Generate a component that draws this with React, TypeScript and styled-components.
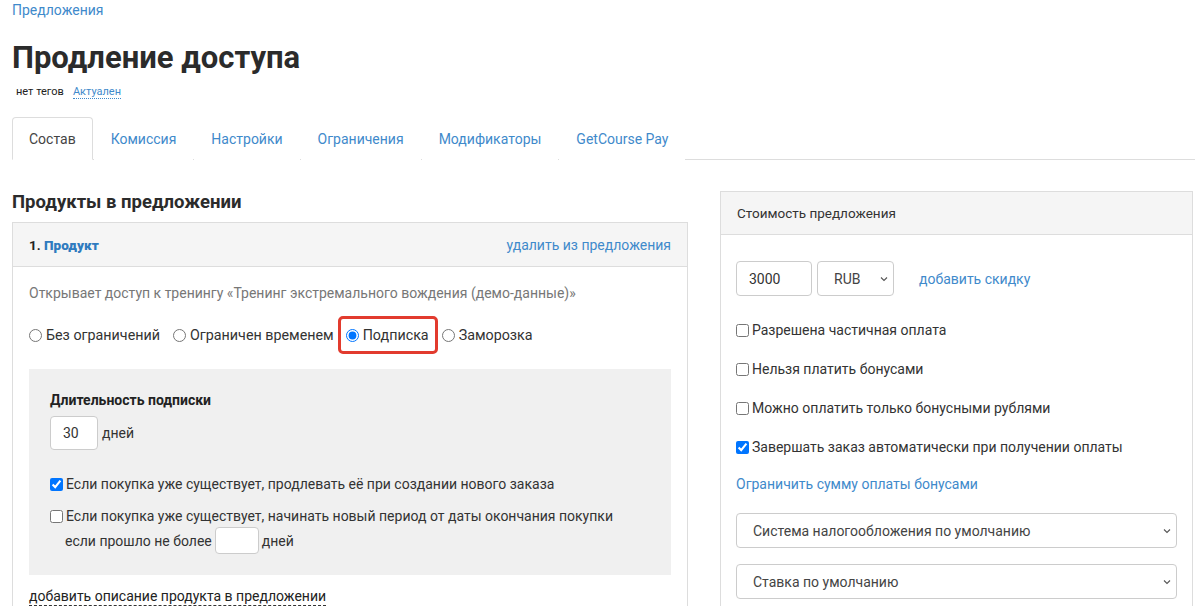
import React from "react";
import styled, { createGlobalStyle } from "styled-components";

const GlobalStyle = createGlobalStyle`
  html, body {
    margin: 0;
    padding: 0;
    background: #fff;
  }
  body {
    font-family: Roboto, "Liberation Sans", sans-serif;
    font-size: 14px;
    color: #333;
  }
  * {
    box-sizing: border-box;
  }
`;

const Page = styled.div`
  padding: 0 4px 0 12px;
  width: 1199px;
  height: 609px;
  overflow: hidden;
`;

const Breadcrumb = styled.a`
  display: block;
  padding-top: 2px;
  height: 38px;
  color: #3f8acb;
  font-size: 14px;
  text-decoration: none;
`;

const Title = styled.h1`
  margin: 0;
  font-size: 31px;
  font-weight: 700;
  line-height: 40px;
  color: #2b2b2b;
`;

const Meta = styled.div`
  display: flex;
  gap: 9px;
  align-items: baseline;
  padding: 7px 0 0 4px;
  height: 39px;
  font-size: 11px;
  color: #222;
`;

const StatusLink = styled.span`
  color: #3f8acb;
  border-bottom: 1px dotted #3f8acb;
  line-height: 13px;
`;

const Tabs = styled.div`
  display: flex;
  border-bottom: 1px solid #ddd;
  height: 43px;
`;

const Tab = styled.div<{ $active?: boolean }>`
  display: flex;
  align-items: center;
  padding: 0 16px;
  margin-right: 1px;
  height: 43px;
  font-size: 14px;
  color: ${(p) => (p.$active ? "#444" : "#3f8acb")};
  background: #fff;
  border: 1px solid ${(p) => (p.$active ? "#ddd" : "transparent")};
  border-bottom-color: ${(p) => (p.$active ? "#fff" : "transparent")};
  border-radius: 4px 4px 0 0;
`;

const Columns = styled.div`
  display: grid;
  grid-template-columns: 676px 473px;
  gap: 32px;
  padding-top: 31px;
`;

const SectionTitle = styled.h2`
  margin: 0 0 9px;
  font-size: 18.5px;
  font-weight: 700;
  line-height: 22px;
  color: #2b2b2b;
`;

const Panel = styled.div`
  border: 1px solid #ddd;
  border-bottom: none;
`;

const PanelHeader = styled.div<{ $spread?: boolean }>`
  display: flex;
  justify-content: ${(p) => (p.$spread ? "space-between" : "flex-start")};
  align-items: center;
  padding: 0 16px;
  height: ${(p) => (p.$spread ? "44px" : "43px")};
  background: #f5f5f5;
  border-bottom: 1px solid #ddd;
  font-size: 13.5px;
`;

const ProductName = styled.span`
  font-weight: 700;
  color: #222;

  b {
    color: #2f7bbf;
  }
`;

const Link = styled.span`
  color: #3f8acb;
  font-size: 14px;
  cursor: pointer;
`;

const PanelBody = styled.div<{ $pad?: string }>`
  padding: ${(p) => p.$pad || "16px"};
`;

const Description = styled.div`
  color: #777;
  font-size: 14px;
  line-height: 20px;
  margin-bottom: 13px;
`;

const RadioRow = styled.div`
  display: flex;
  align-items: center;
  height: 38px;
`;

const RadioLabel = styled.label<{ $highlight?: boolean }>`
  display: flex;
  align-items: center;
  gap: 3px;
  height: 38px;
  padding: ${(p) => (p.$highlight ? "0 6px 0 5px" : "0")};
  margin-right: ${(p) => (p.$highlight ? "4px" : "13px")};
  margin-left: ${(p) => (p.$highlight ? "-9px" : "0")};
  border: ${(p) => (p.$highlight ? "3px solid #e23b2e" : "none")};
  border-radius: 5px;
  font-size: 14.3px;
  color: #333;

  input {
    margin: 0 1px 0 0;
    width: 13px;
    height: 13px;
  }
`;

const GrayBox = styled.div`
  background: #f0f0f0;
  margin-top: 15px;
  padding: 22px 21px 21px;
`;

const FieldTitle = styled.div`
  font-weight: 700;
  font-size: 14px;
  line-height: 18px;
  margin-bottom: 7px;
  color: #222;
`;

const InlineRow = styled.div`
  display: flex;
  align-items: center;
  gap: 4px;
`;

const TextInput = styled.input<{ $w: number; $h: number }>`
  width: ${(p) => p.$w}px;
  height: ${(p) => p.$h}px;
  border: 1px solid #ccc;
  border-radius: 4px;
  background: #fff;
  padding: 0 12px;
  font-family: inherit;
  font-size: 14px;
  color: #333;
  outline: none;
`;

const CheckRow = styled.label<{ $gap?: number }>`
  display: flex;
  align-items: center;
  gap: 3px;
  margin-top: ${(p) => p.$gap ?? 0}px;
  min-height: 20px;
  font-size: 14px;
  color: #333;

  input {
    margin: 0;
    width: 13px;
    height: 13px;
  }
`;

const SubLine = styled.div`
  display: flex;
  align-items: center;
  gap: 3px;
  padding-left: 15px;
  margin-top: 1px;
`;

const DashedLink = styled.div`
  display: inline-block;
  margin-top: 13px;
  color: #222;
  font-size: 14px;
  line-height: 17px;
  border-bottom: 1px dashed #333;
`;

const PriceRow = styled.div`
  display: flex;
  align-items: center;
  gap: 5px;
  margin-top: 10px;
`;

const SelectBox = styled.div<{ $w?: number }>`
  display: flex;
  align-items: center;
  justify-content: space-between;
  width: ${(p) => (p.$w ? `${p.$w}px` : "100%")};
  height: 35px;
  border: 1px solid #ccc;
  border-radius: 4px;
  padding: 0 3px 0 16px;
  background: #fff;
  font-size: 14px;
  color: #444;
`;

const DiscountLink = styled(Link)`
  margin-left: 20px;
`;

const BlueLink = styled.div`
  color: #3f8acb;
  font-size: 14px;
  margin-top: 17px;
  line-height: 20px;
`;

const SelectStack = styled.div`
  display: flex;
  flex-direction: column;
  gap: 16px;
  margin-top: 19px;
`;

const Chevron = () => (
  <svg width="12" height="12" viewBox="0 0 12 12" fill="none">
    <path d="M3 4.5 6 7.5l3-3" stroke="#555" strokeWidth="1.1" />
  </svg>
);

export default function App() {
  return (
    <Page>
      <GlobalStyle />
      <Breadcrumb>Предложения</Breadcrumb>
      <Title>Продление доступа</Title>
      <Meta>
        <span>нет тегов</span>
        <StatusLink>Актуален</StatusLink>
      </Meta>
      <Tabs>
        <Tab $active>Состав</Tab>
        <Tab>Комиссия</Tab>
        <Tab>Настройки</Tab>
        <Tab>Ограничения</Tab>
        <Tab>Модификаторы</Tab>
        <Tab>GetCourse Pay</Tab>
      </Tabs>
      <Columns>
        <div>
          <SectionTitle>Продукты в предложении</SectionTitle>
          <Panel>
            <PanelHeader $spread>
              <ProductName>
                1. <b>Продукт</b>
              </ProductName>
              <Link>удалить из предложения</Link>
            </PanelHeader>
            <PanelBody $pad="16px 16px 0">
              <Description>
                Открывает доступ к тренингу «Тренинг экстремального вождения (демо-данные)»
              </Description>
              <RadioRow>
                <RadioLabel>
                  <input type="radio" name="mode" readOnly />
                  Без ограничений
                </RadioLabel>
                <RadioLabel>
                  <input type="radio" name="mode" readOnly />
                  Ограничен временем
                </RadioLabel>
                <RadioLabel $highlight>
                  <input type="radio" name="mode" defaultChecked />
                  Подписка
                </RadioLabel>
                <RadioLabel>
                  <input type="radio" name="mode" readOnly />
                  Заморозка
                </RadioLabel>
              </RadioRow>
              <GrayBox>
                <FieldTitle>Длительность подписки</FieldTitle>
                <InlineRow>
                  <TextInput $w={48} $h={34} defaultValue="30" />
                  <span>дней</span>
                </InlineRow>
                <CheckRow $gap={24}>
                  <input type="checkbox" defaultChecked />
                  Если покупка уже существует, продлевать её при создании нового заказа
                </CheckRow>
                <CheckRow $gap={12}>
                  <input type="checkbox" />
                  Если покупка уже существует, начинать новый период от даты окончания покупки
                </CheckRow>
                <SubLine>
                  если прошло не более
                  <TextInput $w={44} $h={27} />
                  дней
                </SubLine>
              </GrayBox>
              <DashedLink>добавить описание продукта в предложении</DashedLink>
            </PanelBody>
          </Panel>
        </div>
        <Panel>
          <PanelHeader>Стоимость предложения</PanelHeader>
          <PanelBody $pad="16px 15px 0 15px">
            <PriceRow>
              <TextInput $w={76} $h={35} defaultValue="3000" />
              <SelectBox $w={77}>
                RUB
                <Chevron />
              </SelectBox>
              <DiscountLink>добавить скидку</DiscountLink>
            </PriceRow>
            <CheckRow $gap={24}>
              <input type="checkbox" />
              Разрешена частичная оплата
            </CheckRow>
            <CheckRow $gap={19}>
              <input type="checkbox" />
              Нельзя платить бонусами
            </CheckRow>
            <CheckRow $gap={19}>
              <input type="checkbox" />
              Можно оплатить только бонусными рублями
            </CheckRow>
            <CheckRow $gap={19}>
              <input type="checkbox" defaultChecked />
              Завершать заказ автоматически при получении оплаты
            </CheckRow>
            <BlueLink>Ограничить сумму оплаты бонусами</BlueLink>
            <SelectStack>
              <SelectBox>
                Система налогообложения по умолчанию
                <Chevron />
              </SelectBox>
              <SelectBox>
                Ставка по умолчанию
                <Chevron />
              </SelectBox>
            </SelectStack>
          </PanelBody>
        </Panel>
      </Columns>
    </Page>
  );
}
